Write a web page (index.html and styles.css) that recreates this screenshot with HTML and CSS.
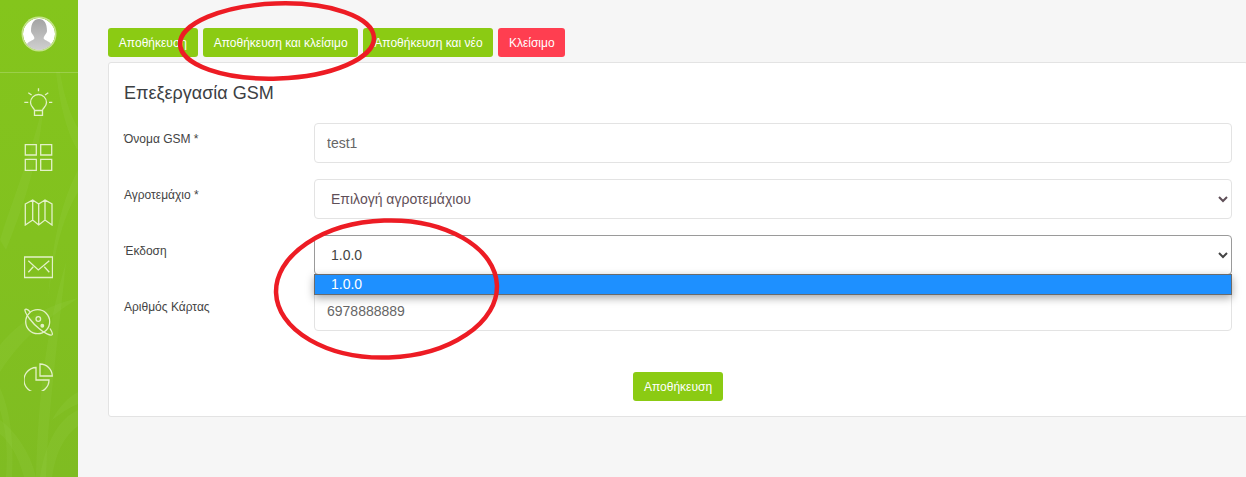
FILE: index.html
```html
<!DOCTYPE html>
<html lang="el">
<head>
<meta charset="utf-8">
<title>Επεξεργασία GSM</title>
<link rel="stylesheet" href="styles.css">
</head>
<body>
<div class="page">
  <aside class="sidebar">
    <svg class="grass" viewBox="0 0 78 477" preserveAspectRatio="none" aria-hidden="true">
      <g fill="#a6d860" fill-opacity=".13">
        <path d="M0 345C22 318 50 305 78 298 52 316 24 334 0 372z"/>
        <path d="M36 477C38 400 46 330 66 262 58 340 48 410 46 477z"/>
        <path d="M0 420C16 432 30 452 36 477H24C18 456 10 442 0 434z"/>
        <path d="M78 410C60 418 46 440 40 477H52C56 452 64 436 78 426z"/>
        <path d="M52 420C60 405 68 398 78 392V404C68 408 60 414 52 420z"/>
        <path d="M0 240C12 200 30 160 44 100 40 160 22 210 6 250z"/>
        <path d="M78 170C62 200 52 240 48 300 54 250 64 215 78 192z"/>
        <path d="M12 477C14 440 10 410 0 388V410C6 430 8 450 6 477z"/>
        <path d="M56 72C60 110 70 140 78 150V128C70 115 64 95 60 72z"/>
      </g>
    </svg>
    <div class="profile">
      <div class="avatar">
        <svg viewBox="0 0 32 32" aria-hidden="true">
          <defs><linearGradient id="av" x1="0" y1="0" x2="0" y2="1"><stop offset="0" stop-color="#a4a4a4"/><stop offset="1" stop-color="#cfcfcf"/></linearGradient></defs>
          <circle cx="16" cy="16" r="16" fill="#fff"/>
          <path d="M3 28c2-5 6-5 8-7 1-1 0-2-1-4-1-1-2-3-2-4C8 5 11 1 16 1s8 4 8 12c0 1-1 3-2 4-1 2-2 3-1 4 2 2 6 2 8 7-3 3-7 4-13 4S6 31 3 28z" fill="url(#av)"/>
        </svg>
      </div>
    </div>
    <nav class="icons">
      <svg class="icon" viewBox="0 0 29 28" aria-hidden="true"><path d="M10.500 22.500C10.500 20 6.500 19 6.500 14.500a8 8 0 0 1 16 0C22.500 19 18.500 20 18.500 22.500zM10.500 22.500v5h8v-5M.3 14.300h4M25 14.300h3.300M14.500.3v3M4.300 4.700L7.600 7M24.300 4.700L21 7"/></svg>
      <svg class="icon" viewBox="0 -1 29 28" aria-hidden="true"><path d="M1.300 .7h11v10.300h-11zM16.700 .7h11v10.300h-11zM1.300 15.300h11v11h-11zM16.700 15.300h11v11h-11z"/></svg>
      <svg class="icon" viewBox="0 -1 29 28" aria-hidden="true"><path d="M1.300 5L8.700 1l6 4L21 1l7 4v21l-7-5-6.300 5-6-5-7.400 5zM8.700 1v20M14.700 5v21M21 1v20"/></svg>
      <svg class="icon" viewBox="0 0 29 28" aria-hidden="true"><path d="M.5 4h28v20.500H.5zM4.300 7.700l10 9.300 11-9.300M4.300 19.300l5-5.600M25.300 19.300l-5-5.600"/></svg>
      <svg class="icon" viewBox="0 0 29 28" aria-hidden="true"><circle cx="13.700" cy="13.700" r="12"/><circle cx="14.300" cy="11" r="2.300"/><circle cx="18.300" cy="17.700" r="1.300" class="dot"/><path d="M6 3.700C3 .5 .5 .5 1 2.500 1.500 6 8 15 15 20.500c5 4.500 12 8 13.300 6 .5-1.500-1-4-2.300-6"/></svg>
      <svg class="icon" viewBox="0 0 29 28" aria-hidden="true"><path d="M12 4.500A12.500 12.500 0 1 0 25 17H12zM16 1v12h12.300A12.300 12.300 0 0 0 16 1z"/></svg>
    </nav>
  </aside>

  <main class="main">
    <div class="toolbar">
      <button class="btn" type="button">Αποθήκευση</button>
      <button class="btn" type="button">Αποθήκευση και κλείσιμο</button>
      <button class="btn" type="button">Αποθήκευση και νέο</button>
      <button class="btn btn-danger" type="button">Κλείσιμο</button>
    </div>
    <section class="card">
      <h1 class="title">Επεξεργασία GSM</h1>
      <form class="form">
        <div class="row">
          <label class="label">Όνομα GSM *</label>
          <input class="control" type="text" value="test1">
        </div>
        <div class="row">
          <label class="label">Αγροτεμάχιο *</label>
          <select class="control select select-muted"><option>Επιλογή αγροτεμάχιου</option></select>
        </div>
        <div class="row">
          <label class="label">Έκδοση</label>
          <div class="select-wrap">
            <select class="control select select-open"><option>1.0.0</option></select>
            <div class="dropdown"><div class="dropdown-item">1.0.0</div></div>
          </div>
        </div>
        <div class="row">
          <label class="label">Αριθμός Κάρτας</label>
          <input class="control" type="text" value="6978888889">
        </div>
        <div class="submit">
          <button class="btn" type="button">Αποθήκευση</button>
        </div>
      </form>
    </section>
  </main>
</div>

<svg class="annotations" viewBox="0 0 1246 477" aria-hidden="true">
  <ellipse cx="277" cy="41" rx="97" ry="37.500" transform="rotate(-2 277 41)"/>
  <ellipse cx="386.500" cy="289" rx="110.500" ry="68.500" transform="rotate(-2 386.500 289)"/>
</svg>
</body>
</html>
```
FILE: styles.css
```css
* { box-sizing: border-box; }

html, body {
  margin: 0;
  height: 100%;
  overflow: hidden;
}

body {
  position: relative;
  background: #f6f6f6;
  font-family: "Liberation Sans", Arial, sans-serif;
  color: #444;
}

.page {
  display: flex;
  height: 477px;
  overflow: hidden;
}

.sidebar {
  position: relative;
  flex: 0 0 78px;
  background: linear-gradient(180deg, #84c51c 0%, #82c11f 50%, #7fbc22 100%);
}

.grass {
  position: absolute;
  inset: 0;
  width: 100%;
  height: 100%;
}

.profile {
  position: relative;
  display: flex;
  justify-content: center;
  height: 73px;
  padding: 18px 1px 0 0;
  border-bottom: 1px solid rgba(255, 255, 255, .2);
}

.avatar {
  width: 32px;
  height: 32px;
  border-radius: 50%;
  box-shadow: 0 0 0 1.500px rgba(225, 240, 190, .7);
  overflow: hidden;
}

.avatar svg {
  display: block;
  width: 100%;
  height: 100%;
}

.icons {
  position: relative;
  display: flex;
  flex-direction: column;
  align-items: center;
  gap: 27px;
  padding: 15px 1px 0 0;
}

.icon {
  display: block;
  width: 29px;
  height: 28px;
  fill: none;
  stroke: #e3f1c8;
  stroke-width: 1.300;
}

.icon .dot { fill: #e3f1c8; }

.main {
  flex: 1 1 auto;
  min-width: 0;
  padding: 28px 0 0 30px;
}

.toolbar {
  display: flex;
  gap: 5px;
  margin-bottom: 5px;
}

.btn {
  height: 29px;
  padding: 0 10.850px;
  border: 0;
  border-radius: 3px;
  background: #8bcb13;
  color: #fff;
  font: 12px "Liberation Sans", Arial, sans-serif;
  white-space: nowrap;
}

.btn-danger {
  padding: 0 10.500px;
  background: #ff3e50;
}

.card {
  width: 1140px;
  height: 355px;
  padding: 20px 15px 0;
  background: #fff;
  border: 1px solid #e3e3e3;
  border-radius: 3px;
}

.title {
  margin: 0 0 19px;
  font-size: 18px;
  line-height: 21px;
  font-weight: 400;
  color: #3c4043;
}

.form {
  display: flex;
  flex-direction: column;
  gap: 16px;
}

.row {
  display: flex;
  align-items: flex-start;
}

.label {
  flex: 0 0 190px;
  padding-top: 9px;
  font-size: 12px;
  line-height: 14px;
  color: #444;
}

.control {
  display: block;
  width: 918px;
  height: 40px;
  padding: 0 12px;
  background: #fff;
  border: 1px solid #e3e3e3;
  border-radius: 4px;
  font: 14px "Liberation Sans", Arial, sans-serif;
  color: #666;
  outline: none;
}

.select-muted { color: #5f4f58; }

.select-open {
  border-color: #9a9a9a;
  color: #444;
}

.select-wrap {
  position: relative;
  width: 918px;
}

.dropdown {
  position: absolute;
  top: 39px;
  left: 0;
  right: 0;
  border: 1px solid #6b6b6b;
  background: #1e90ff;
  box-shadow: 0 3px 8px rgba(0, 0, 0, .35);
}

.dropdown-item {
  height: 19px;
  padding-left: 16px;
  font-size: 14px;
  line-height: 19px;
  color: #fff;
}

.submit {
  display: flex;
  justify-content: center;
  padding-top: 25px;
}

.annotations {
  position: absolute;
  top: 0;
  left: 0;
  width: 1246px;
  height: 477px;
  pointer-events: none;
}

.annotations ellipse {
  fill: none;
  stroke: #ed1c24;
  stroke-width: 4.500;
}
```
